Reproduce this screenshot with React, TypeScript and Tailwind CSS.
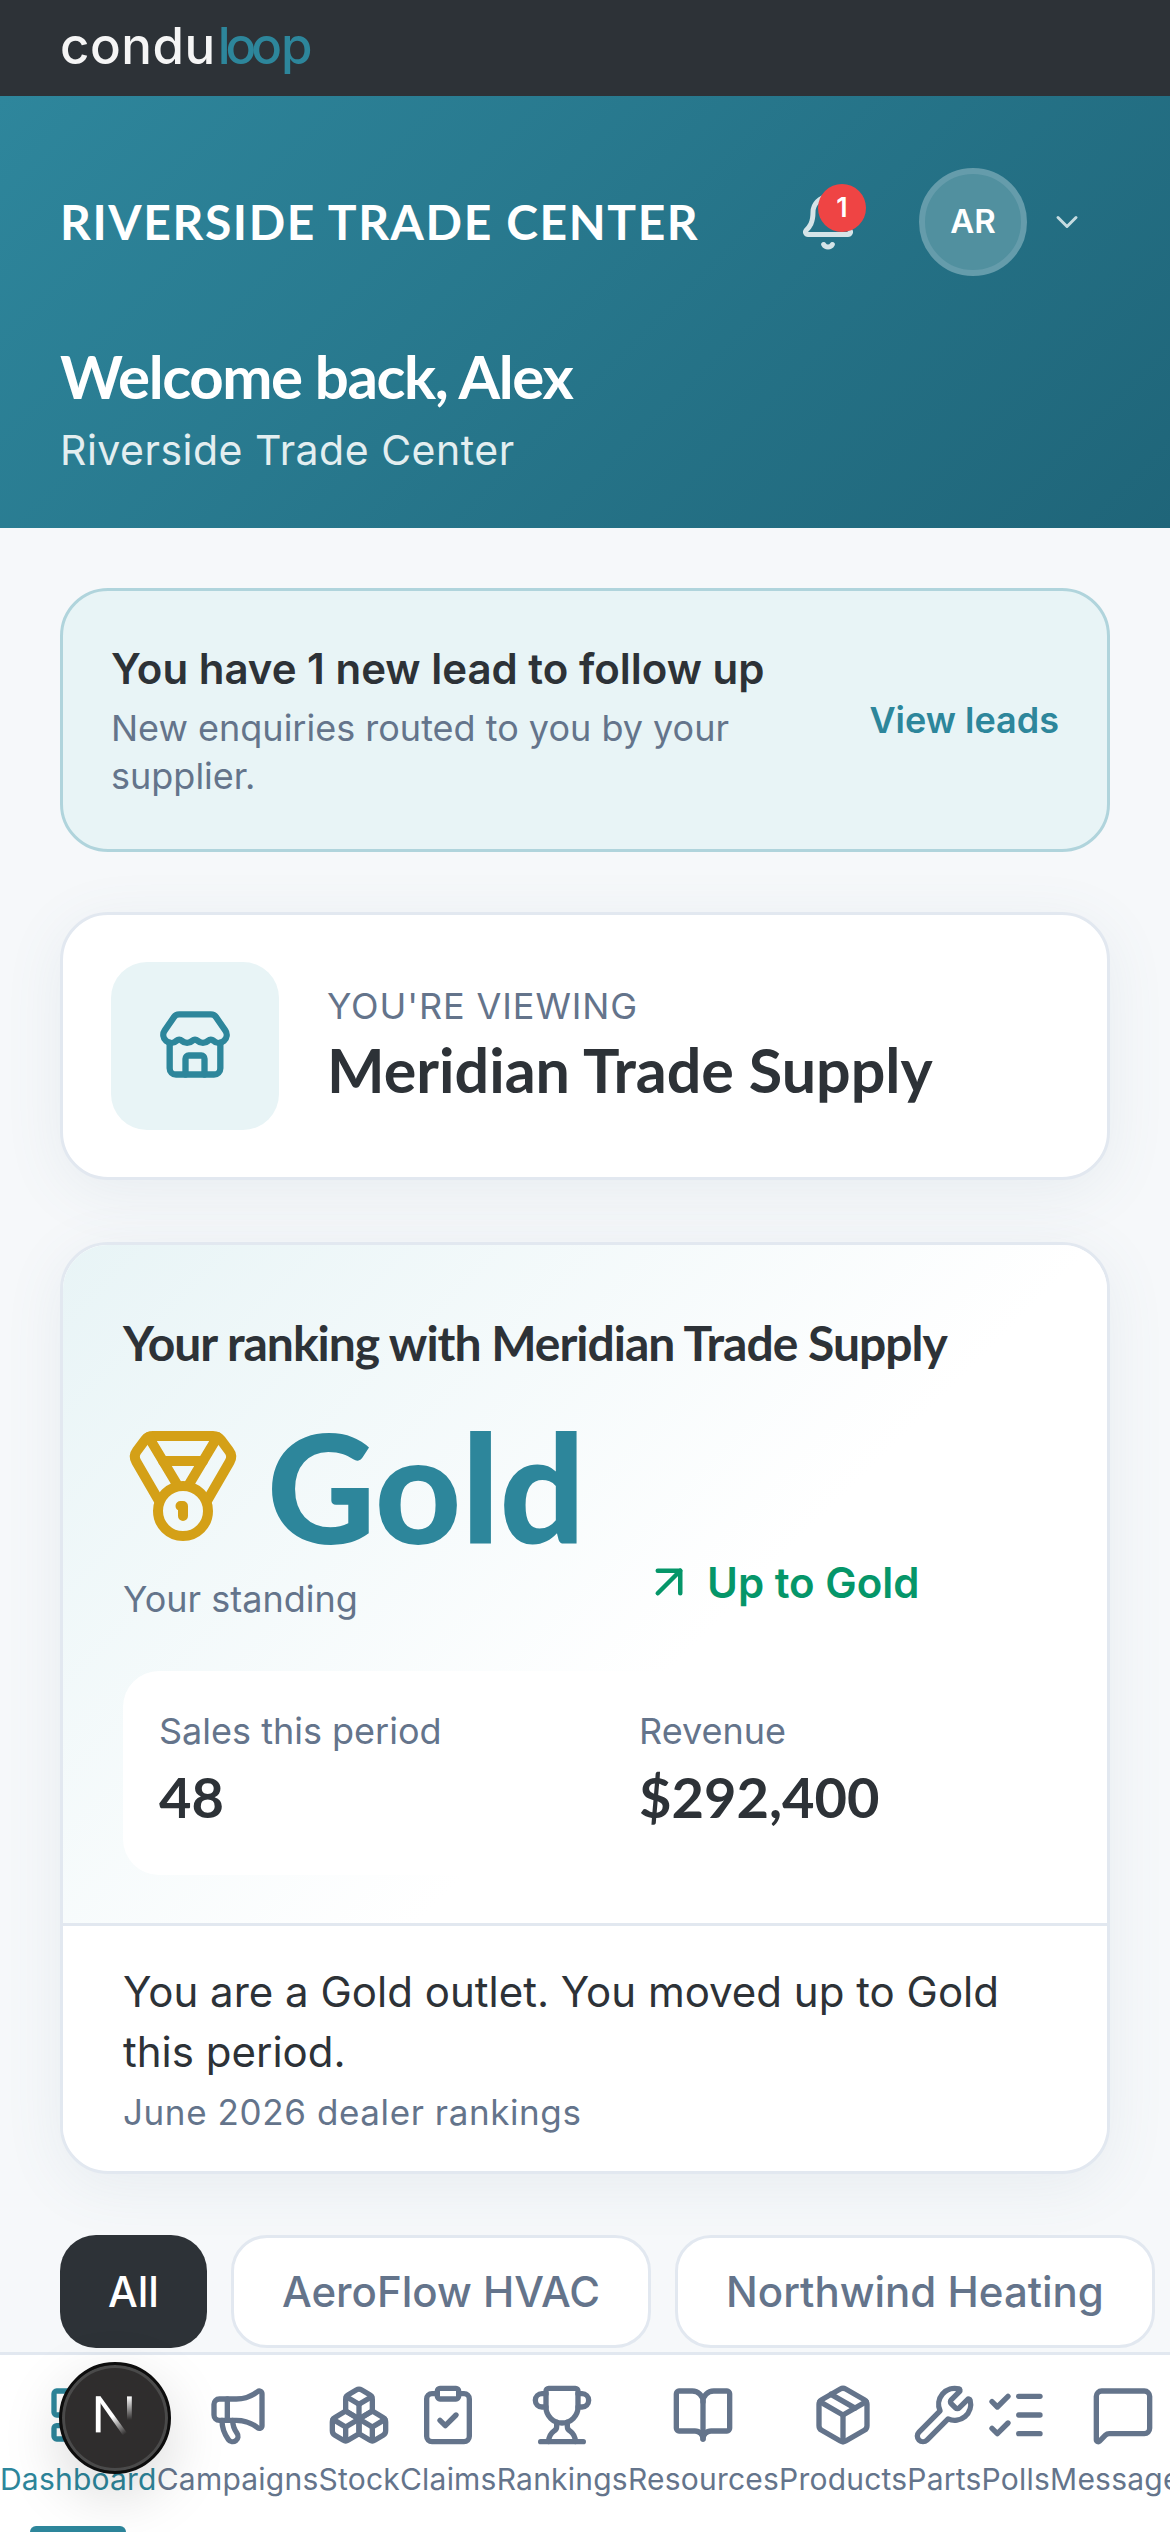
import React from "react";
import { Bell, ChevronDown, Store, Medal, ArrowUpRight, LayoutDashboard, Megaphone, Boxes, ClipboardCheck, Trophy, BookOpen, Package, Wrench, ListChecks, MessageSquare } from "lucide-react";

const head = "font-['Lato','Liberation_Sans',sans-serif]";
const navItems = [
  { label: "Dashboard", Icon: LayoutDashboard, active: true },
  { label: "Campaigns", Icon: Megaphone },
  { label: "Stock", Icon: Boxes },
  { label: "Claims", Icon: ClipboardCheck },
  { label: "Rankings", Icon: Trophy },
  { label: "Resources", Icon: BookOpen },
  { label: "Products", Icon: Package },
  { label: "Parts", Icon: Wrench },
  { label: "Polls", Icon: ListChecks },
  { label: "Messages", Icon: MessageSquare },
];

export default function App() {
  return (
    <div className="relative flex h-[2532px] w-[1170px] flex-col overflow-hidden bg-[#f6f8fa] font-['Inter',sans-serif]">
      <header className="flex h-[96px] shrink-0 items-center bg-[#2d3237] px-[60px]">
        <div className="-mt-[6px] flex items-baseline text-[51px] font-medium leading-none tracking-[0.5px] text-[#f5f5f5]">
          condu<span className="pl-[2px] tracking-[-5px] text-[#2d869b]">loo</span><span className="pl-[4px] text-[#2d869b]">p</span>
        </div>
      </header>

      <section className="h-[432px] shrink-0 bg-[linear-gradient(135deg,#2e869c,#1f6579)] px-[60px]">
        <div className="flex h-[222px] items-center justify-between pt-[30px]">
          <h1 className={`${head} text-[48px] font-bold tracking-[1.6px] text-white`}>RIVERSIDE TRADE CENTER</h1>
          <div className="flex items-center">
            <div className="relative mr-[61px] h-[60px] w-[60px]">
              <Bell className="h-[60px] w-[60px] text-[#d5e4e8]" strokeWidth={2} />
              <span className="absolute -right-[8px] -top-[8px] flex h-[48px] w-[48px] items-center justify-center rounded-full bg-[#ef4444] text-[27px] font-semibold text-white">1</span>
            </div>
            <div className="flex h-[108px] w-[108px] items-center justify-center rounded-full border-[6px] border-[#659cab] bg-[#51909f] text-[33px] font-semibold text-white">AR</div>
            <ChevronDown className="ml-[22px] mr-[25px] h-[36px] w-[36px] text-[#c5dbe0]" strokeWidth={2} />
          </div>
        </div>
        <div className="mt-[22px]">
          <h2 className={`${head} text-[60px] font-bold leading-[72px] tracking-[-1.4px] text-white`}>Welcome back, Alex</h2>
          <p className="mt-[8px] text-[41px] leading-[60px] tracking-[0.5px] text-[#e3eef0]">Riverside Trade Center</p>
        </div>
      </section>

      <main className="flex min-h-0 flex-1 flex-col overflow-hidden px-[60px] pt-[60px]">
        <div className="flex h-[264px] shrink-0 items-center justify-between rounded-[48px] border-[3px] border-[#b0d4dc] bg-[#e8f4f6] px-[48px]">
          <div className="w-[700px]">
            <p className="text-[42px] font-semibold leading-[56px] text-[#2d3237]">You have 1 new lead to follow up</p>
            <p className="mt-[7px] text-[36px] leading-[48px] text-[#64748b]">New enquiries routed to you by your supplier.</p>
          </div>
          <span className="text-[36px] font-semibold text-[#2d869b]">View leads</span>
        </div>

        <div className="mt-[60px] flex h-[268px] shrink-0 items-center gap-[48px] rounded-[48px] border-[3px] border-[#e2e8f0] bg-white pl-[48px] shadow-[0_12px_60px_rgba(90,125,140,0.09)]">
          <div className="flex h-[168px] w-[168px] items-center justify-center rounded-[36px] bg-[#e8f4f6]">
            <Store className="h-[76px] w-[76px] text-[#2d869b]" strokeWidth={2} />
          </div>
          <div>
            <p className="-mt-[4px] text-[36px] leading-[48px] tracking-[0.9px] text-[#64748b]">YOU'RE VIEWING</p>
            <p className={`${head} mt-[4px] text-[61px] font-bold leading-[72px] text-[#2d3237]`}>Meridian Trade Supply</p>
          </div>
        </div>

        <div className="mt-[62px] h-[932px] shrink-0 overflow-hidden rounded-[48px] border-[3px] border-[#e2e8f0] bg-white shadow-[0_12px_60px_rgba(90,125,140,0.09)]">
          <div className="h-[678px] bg-[linear-gradient(135deg,#e8f4f6_0%,#ffffff_60%)] px-[60px] pt-[68px]">
            <h3 className={`${head} text-[48px] font-bold leading-[60px] tracking-[-1px] text-[#2d3237]`}>Your ranking with Meridian Trade Supply</h3>
            <div className="flex">
              <div className="w-[519px]">
                <div className="mt-[48px] flex h-[130px] items-center gap-[24px]">
                  <Medal className="h-[120px] w-[120px] text-[#d4a017]" strokeWidth={2} />
                  <span className={`${head} text-[150px] font-black leading-[130px] text-[#2d869b]`}>Gold</span>
                </div>
                <p className="mt-[24px] text-[36px] leading-[48px] text-[#64748b]">Your standing</p>
              </div>
              <div className="mt-[179px] flex h-[60px] items-center gap-[11px] text-[#059669]">
                <ArrowUpRight className="h-[54px] w-[54px]" strokeWidth={2} />
                <span className="text-[42px] font-semibold">Up to Gold</span>
              </div>
            </div>
            <div className="mt-[48px] flex h-[204px] items-center rounded-[36px] bg-white pb-[6px] pl-[36px]">
              <div className="w-[480px]">
                <p className="text-[36px] leading-[48px] text-[#64748b]">Sales this period</p>
                <p className={`${head} mt-[6px] text-[56px] font-bold leading-[72px] text-[#2d3237]`}>48</p>
              </div>
              <div>
                <p className="text-[36px] leading-[48px] text-[#64748b]">Revenue</p>
                <p className={`${head} mt-[6px] text-[56px] font-bold leading-[72px] text-[#2d3237]`}>$292,400</p>
              </div>
            </div>
          </div>
          <div className="border-t-[3px] border-[#e2e8f0] bg-white px-[60px] pt-[36px]">
            <p className="text-[42px] leading-[60px] text-[#2d3237]">You are a Gold outlet. You moved up to Gold this period.</p>
            <p className="mt-[6px] text-[35px] leading-[48px] tracking-[0.6px] text-[#64748b]">June 2026 dealer rankings</p>
          </div>
        </div>

        <div className="mt-[61px] flex shrink-0 gap-[24px]">
          <button className="h-[113px] rounded-[36px] bg-[#2d3237] px-[48px] text-[42px] font-medium text-white">All</button>
          <button className="h-[113px] whitespace-nowrap rounded-[36px] border-[3px] border-[#e2e8f0] bg-white px-[48px] text-[42px] font-medium text-[#64748b]">AeroFlow HVAC</button>
          <button className="h-[113px] whitespace-nowrap rounded-[36px] border-[3px] border-[#e2e8f0] bg-white px-[48px] text-[42px] font-medium text-[#64748b]">Northwind Heating</button>
        </div>
      </main>

      <nav className="flex h-[180px] shrink-0 overflow-hidden border-t-[3px] border-[#e2e8f0] bg-white">
        {navItems.map(({ label, Icon, active }) => (
          <div key={label} className={`relative flex shrink-0 flex-col items-center pt-[28px] ${active ? "text-[#2d869b]" : "text-[#64748b]"}`}>
            <Icon className="h-[64px] w-[64px]" strokeWidth={2} />
            <span className="mt-[10px] text-[30px] leading-[44px] tracking-[0.22px]">{label}</span>
            {active && <span className="absolute bottom-0 left-[30px] h-[6px] w-[96px] rounded-t-[6px] bg-[#2d869b]" />}
          </div>
        ))}
      </nav>

      <div className="absolute left-[59px] top-[2362px] flex h-[112px] w-[112px] items-center justify-center rounded-full border-[3px] border-[#0d0d0d] bg-[#2f2d2d] shadow-[inset_0_0_0_3px_#4a4a4a,0_20px_60px_rgba(0,0,0,0.15)]">
        <svg viewBox="0 0 40 40" className="h-[48px] w-[48px]">
          <defs>
            <linearGradient id="nfade" x1="0" y1="0" x2="0.6" y2="1"><stop offset="0.55" stopColor="#fff" /><stop offset="1" stopColor="#fff" stopOpacity="0" /></linearGradient>
            <linearGradient id="nfade2" x1="0" y1="0" x2="0" y2="1"><stop offset="0" stopColor="#fff" /><stop offset="0.7" stopColor="#fff" stopOpacity="0" /></linearGradient>
          </defs>
          <path d="M4 2h4v30H4z" fill="#fff" />
          <path d="M4 2h4l26 36h-5z" fill="url(#nfade)" />
          <rect x="30" y="2" width="4" height="28" fill="url(#nfade2)" />
        </svg>
      </div>
    </div>
  );
}
